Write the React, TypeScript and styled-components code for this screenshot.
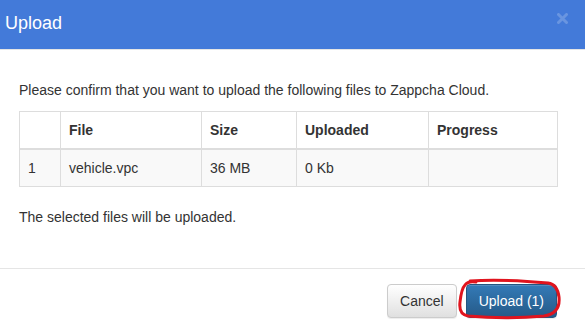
import styled, { createGlobalStyle } from 'styled-components';

const GlobalStyle = createGlobalStyle`
  html, body {
    margin: 0;
    padding: 0;
    background: #ffffff;
  }
  body {
    font-family: 'Liberation Sans', Arial, sans-serif;
    font-size: 14px;
    line-height: 20px;
    color: #333333;
  }
`;

const Modal = styled.div`
  width: 585px;
  height: 329px;
  display: flex;
  flex-direction: column;
  background: #ffffff;
  overflow: hidden;
`;

const Header = styled.div`
  height: 49px;
  display: flex;
  align-items: center;
  justify-content: space-between;
  padding: 0 17px 0 5px;
  background-color: #437ad9;
  border-bottom: 1px solid #e5e5e5;
  box-sizing: content-box;
`;

const Title = styled.h4`
  margin: 0 0 4px;
  font-size: 18px;
  font-weight: normal;
  color: #ffffff;
  line-height: 20px;
`;

const CloseButton = styled.button`
  display: flex;
  padding: 0;
  margin: 0 0 13px;
  border: none;
  background: transparent;
  opacity: 0.2;
  cursor: pointer;
`;

const Body = styled.div`
  padding: 30px 28px 30px 19px;
  border-bottom: 1px solid #e5e5e5;
`;

const Text = styled.p`
  margin: 0 0 11px;
`;

const Table = styled.table`
  width: 538px;
  margin-bottom: 20px;
  border-collapse: collapse;
  table-layout: fixed;
  border: 1px solid #dddddd;
`;

const Th = styled.th<{ $w: number }>`
  box-sizing: border-box;
  width: ${(p) => p.$w}px;
  padding: 8px;
  text-align: left;
  font-weight: bold;
  border: 1px solid #dddddd;
  border-bottom: 2px solid #dddddd;
  line-height: 20px;
`;

const Row = styled.tr`
  background-color: #f9f9f9;
`;

const Td = styled.td`
  padding: 8px;
  border: 1px solid #dddddd;
  line-height: 20px;
`;

const Footer = styled.div`
  display: flex;
  justify-content: flex-end;
  gap: 9px;
  padding: 15px 28px 0 0;
`;

const Button = styled.button<{ $primary?: boolean }>`
  height: 34px;
  padding: 6px 12px;
  font-family: 'Liberation Sans', Arial, sans-serif;
  font-size: 14px;
  line-height: 20px;
  border-radius: 4px;
  cursor: pointer;
  color: ${(p) => (p.$primary ? '#ffffff' : '#333333')};
  border: 1px solid ${(p) => (p.$primary ? '#245580' : '#cccccc')};
  background-image: ${(p) =>
    p.$primary
      ? 'linear-gradient(to bottom, #337ab7 0%, #265a88 100%)'
      : 'linear-gradient(to bottom, #ffffff 0%, #e0e0e0 100%)'};
  box-shadow: inset 0 1px 0 rgba(255, 255, 255, 0.15), 0 1px 1px rgba(0, 0, 0, 0.075);
`;

const Marked = styled.div`
  position: relative;
`;

const Scribble = styled.svg`
  position: absolute;
  left: -8px;
  top: -4px;
  width: 104px;
  height: 40px;
  pointer-events: none;
  overflow: visible;
`;

const columns = [
  { label: '', w: 41 },
  { label: 'File', w: 141 },
  { label: 'Size', w: 95 },
  { label: 'Uploaded', w: 132 },
  { label: 'Progress', w: 129 },
];

const files = [{ name: 'vehicle.vpc', size: '36 MB', uploaded: '0 Kb', progress: '' }];

function App() {
  return (
    <>
      <GlobalStyle />
      <Modal>
        <Header>
          <Title>Upload</Title>
          <CloseButton aria-label="Close">
            <svg width="11" height="11" viewBox="0 0 11 11">
              <path d="M1.5 1.5 L9.5 9.5 M9.5 1.5 L1.5 9.5" stroke="#ffffff" strokeWidth="3" strokeLinecap="round" />
            </svg>
          </CloseButton>
        </Header>
        <Body>
          <Text>Please confirm that you want to upload the following files to Zappcha Cloud.</Text>
          <Table>
            <thead>
              <tr>
                {columns.map((c) => (
                  <Th key={c.label} $w={c.w}>
                    {c.label}
                  </Th>
                ))}
              </tr>
            </thead>
            <tbody>
              {files.map((f, i) => (
                <Row key={f.name}>
                  <Td>{i + 1}</Td>
                  <Td>{f.name}</Td>
                  <Td>{f.size}</Td>
                  <Td>{f.uploaded}</Td>
                  <Td>{f.progress}</Td>
                </Row>
              ))}
            </tbody>
          </Table>
          <Text>The selected files will be uploaded.</Text>
        </Body>
        <Footer>
          <Button>Cancel</Button>
          <Marked>
            <Button $primary>Upload (1)</Button>
            <Scribble viewBox="0 0 104 40">
              <path
                d="M12 1 C40 -1 68 1 90 3 C97 4 100 9 101 17 C102 27 98 34 86 36 C64 38 32 38 10 36 C4 35 1 30 2 22 C3 13 4 8 7 5 C9 2 12 1 18 2"
                fill="none"
                stroke="#e0141e"
                strokeWidth="3"
                strokeLinecap="round"
              />
            </Scribble>
          </Marked>
        </Footer>
      </Modal>
    </>
  );
}

export default App;
